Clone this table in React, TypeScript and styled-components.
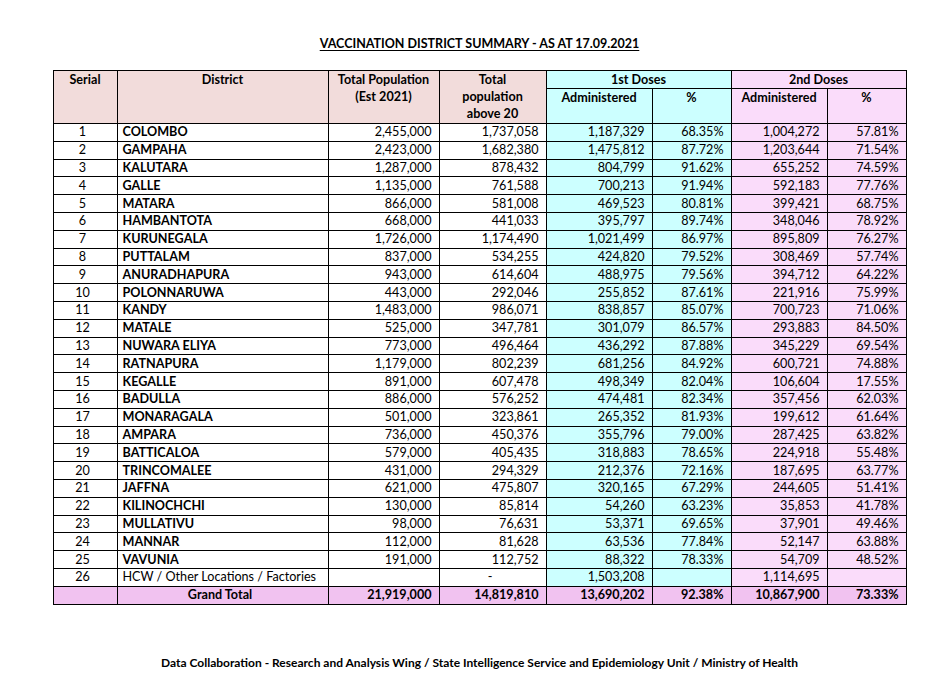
import React from "react";
import styled, { createGlobalStyle } from "styled-components";

const GlobalStyle = createGlobalStyle`
  html, body { margin: 0; padding: 0; background: #ffffff; }
  body { font-family: Lato, "Open Sans", "Liberation Sans", sans-serif; color: #000; }
`;

const Page = styled.div`
  width: 853px;
  margin-left: 53px;
  padding-top: 35px;
  display: flex;
  flex-direction: column;
  align-items: center;
`;

const Title = styled.h1`
  margin: 0;
  font-size: 12.5px;
  line-height: 18px;
  font-weight: 700;
  text-decoration: underline;
  text-underline-offset: 2px;
`;

const Table = styled.table`
  margin-top: 17px;
  width: 853px;
  table-layout: fixed;
  border-collapse: collapse;
  font-size: 12.6px;
`;

type Tone = "head" | "cyan" | "pink" | "white" | "total";
const bg: Record<Tone, string> = {
  head: "#f2dcdb",
  cyan: "#ccffff",
  pink: "#fadcfa",
  white: "#ffffff",
  total: "#f1c2f0",
};

const Th = styled.th<{ $tone: Tone }>`
  border: 1px solid #000;
  background: ${(p) => bg[p.$tone]};
  font-weight: 700;
  text-align: center;
  vertical-align: top;
  padding: 0 2px;
  line-height: 17px;
`;

const HeadRow = styled.tr<{ $h: number }>`
  height: ${(p) => p.$h}px;
`;

const BodyRow = styled.tr`
  height: 17.8px;
`;

const Td = styled.td<{ $tone: Tone; $align?: "left" | "right" | "center"; $bold?: boolean }>`
  border: 1px solid #000;
  background: ${(p) => bg[p.$tone]};
  text-align: ${(p) => p.$align || "right"};
  font-weight: ${(p) => (p.$bold ? 700 : 400)};
  padding: 0 ${(p) => (p.$align === "left" ? "2px" : "7px")} 0 ${(p) => (p.$align === "left" ? "5px" : "2px")};
  line-height: 16px;
  white-space: nowrap;
  vertical-align: middle;
`;

const Footer = styled.p`
  margin: 50px 0 0;
  font-size: 12px;
  line-height: 16px;
  font-weight: 700;
`;

type Row = [string, string, string, string, string, string, string, string];

const rows: Row[] = [
  ["1", "COLOMBO", "2,455,000", "1,737,058", "1,187,329", "68.35%", "1,004,272", "57.81%"],
  ["2", "GAMPAHA", "2,423,000", "1,682,380", "1,475,812", "87.72%", "1,203,644", "71.54%"],
  ["3", "KALUTARA", "1,287,000", "878,432", "804,799", "91.62%", "655,252", "74.59%"],
  ["4", "GALLE", "1,135,000", "761,588", "700,213", "91.94%", "592,183", "77.76%"],
  ["5", "MATARA", "866,000", "581,008", "469,523", "80.81%", "399,421", "68.75%"],
  ["6", "HAMBANTOTA", "668,000", "441,033", "395,797", "89.74%", "348,046", "78.92%"],
  ["7", "KURUNEGALA", "1,726,000", "1,174,490", "1,021,499", "86.97%", "895,809", "76.27%"],
  ["8", "PUTTALAM", "837,000", "534,255", "424,820", "79.52%", "308,469", "57.74%"],
  ["9", "ANURADHAPURA", "943,000", "614,604", "488,975", "79.56%", "394,712", "64.22%"],
  ["10", "POLONNARUWA", "443,000", "292,046", "255,852", "87.61%", "221,916", "75.99%"],
  ["11", "KANDY", "1,483,000", "986,071", "838,857", "85.07%", "700,723", "71.06%"],
  ["12", "MATALE", "525,000", "347,781", "301,079", "86.57%", "293,883", "84.50%"],
  ["13", "NUWARA ELIYA", "773,000", "496,464", "436,292", "87.88%", "345,229", "69.54%"],
  ["14", "RATNAPURA", "1,179,000", "802,239", "681,256", "84.92%", "600,721", "74.88%"],
  ["15", "KEGALLE", "891,000", "607,478", "498,349", "82.04%", "106,604", "17.55%"],
  ["16", "BADULLA", "886,000", "576,252", "474,481", "82.34%", "357,456", "62.03%"],
  ["17", "MONARAGALA", "501,000", "323,861", "265,352", "81.93%", "199,612", "61.64%"],
  ["18", "AMPARA", "736,000", "450,376", "355,796", "79.00%", "287,425", "63.82%"],
  ["19", "BATTICALOA", "579,000", "405,435", "318,883", "78.65%", "224,918", "55.48%"],
  ["20", "TRINCOMALEE", "431,000", "294,329", "212,376", "72.16%", "187,695", "63.77%"],
  ["21", "JAFFNA", "621,000", "475,807", "320,165", "67.29%", "244,605", "51.41%"],
  ["22", "KILINOCHCHI", "130,000", "85,814", "54,260", "63.23%", "35,853", "41.78%"],
  ["23", "MULLATIVU", "98,000", "76,631", "53,371", "69.65%", "37,901", "49.46%"],
  ["24", "MANNAR", "112,000", "81,628", "63,536", "77.84%", "52,147", "63.88%"],
  ["25", "VAVUNIA", "191,000", "112,752", "88,322", "78.33%", "54,709", "48.52%"],
];

export default function App() {
  return (
    <>
      <GlobalStyle />
      <Page>
        <Title>VACCINATION DISTRICT SUMMARY - AS AT 17.09.2021</Title>
        <Table>
          <colgroup>
            <col style={{ width: 64 }} />
            <col style={{ width: 211 }} />
            <col style={{ width: 111 }} />
            <col style={{ width: 107 }} />
            <col style={{ width: 106 }} />
            <col style={{ width: 79 }} />
            <col style={{ width: 96 }} />
            <col style={{ width: 79 }} />
          </colgroup>
          <thead>
            <HeadRow $h={16}>
              <Th $tone="head" rowSpan={2}>Serial</Th>
              <Th $tone="head" rowSpan={2}>District</Th>
              <Th $tone="head" rowSpan={2}>Total Population<br />(Est 2021)</Th>
              <Th $tone="head" rowSpan={2}>Total<br />population<br />above 20</Th>
              <Th $tone="cyan" colSpan={2}>1st Doses</Th>
              <Th $tone="pink" colSpan={2}>2nd Doses</Th>
            </HeadRow>
            <HeadRow $h={35}>
              <Th $tone="cyan">Administered</Th>
              <Th $tone="cyan">%</Th>
              <Th $tone="pink">Administered</Th>
              <Th $tone="pink">%</Th>
            </HeadRow>
          </thead>
          <tbody>
            {rows.map((r) => (
              <BodyRow key={r[0]}>
                <Td $tone="white" $align="center">{r[0]}</Td>
                <Td $tone="white" $align="left" $bold>{r[1]}</Td>
                <Td $tone="white">{r[2]}</Td>
                <Td $tone="white">{r[3]}</Td>
                <Td $tone="cyan">{r[4]}</Td>
                <Td $tone="cyan">{r[5]}</Td>
                <Td $tone="pink">{r[6]}</Td>
                <Td $tone="pink">{r[7]}</Td>
              </BodyRow>
            ))}
            <BodyRow>
              <Td $tone="white" $align="center">26</Td>
              <Td $tone="white" $align="left">HCW / Other Locations / Factories</Td>
              <Td $tone="white"></Td>
              <Td $tone="white" $align="center">-</Td>
              <Td $tone="cyan">1,503,208</Td>
              <Td $tone="cyan"></Td>
              <Td $tone="pink">1,114,695</Td>
              <Td $tone="pink"></Td>
            </BodyRow>
            <BodyRow>
              <Td $tone="total" $align="center"></Td>
              <Td $tone="total" $align="center" $bold>Grand Total</Td>
              <Td $tone="total" $bold>21,919,000</Td>
              <Td $tone="total" $bold>14,819,810</Td>
              <Td $tone="total" $bold>13,690,202</Td>
              <Td $tone="total" $bold>92.38%</Td>
              <Td $tone="total" $bold>10,867,900</Td>
              <Td $tone="total" $bold>73.33%</Td>
            </BodyRow>
          </tbody>
        </Table>
        <Footer>Data Collaboration - Research and Analysis Wing / State Intelligence Service and Epidemiology Unit / Ministry of Health</Footer>
      </Page>
    </>
  );
}
